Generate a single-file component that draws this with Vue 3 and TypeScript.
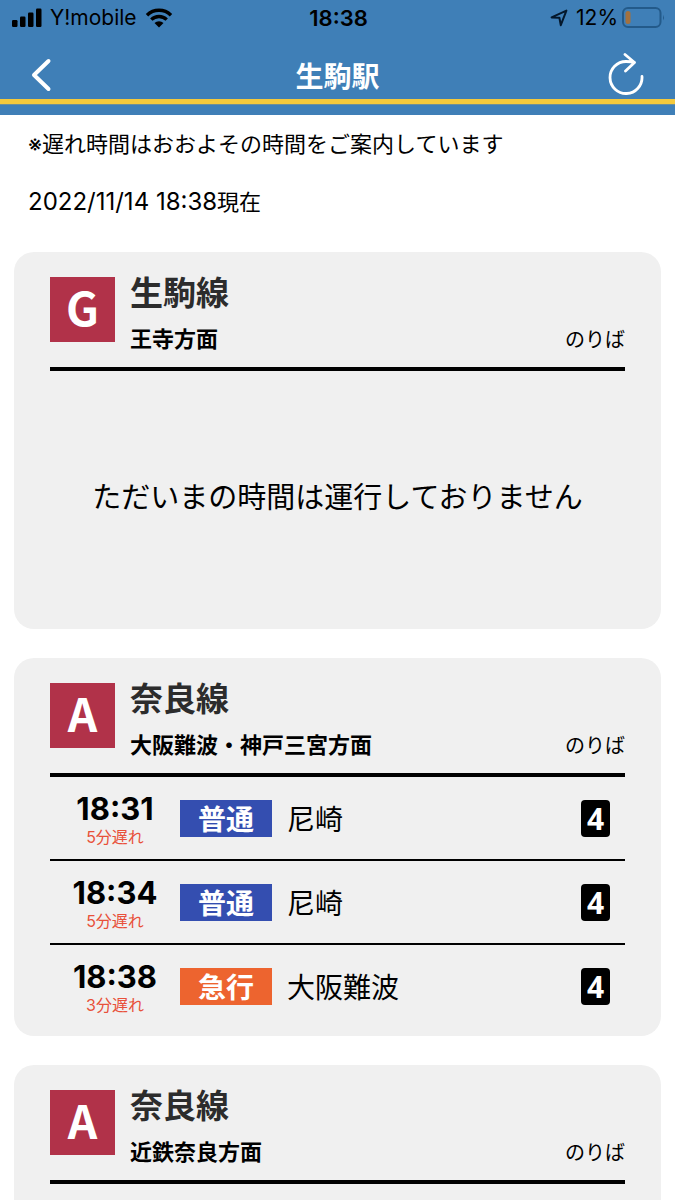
<script setup lang="ts">
interface Departure {
  time: string
  delay: string
  type: string
  kind: 'local' | 'express'
  destination: string
  platform: string
}

interface Board {
  symbol: string
  line: string
  direction: string
  message?: string
  departures: Departure[]
}

const boards: Board[] = [
  {
    symbol: 'G',
    line: '生駒線',
    direction: '王寺方面',
    message: 'ただいまの時間は運行しておりません',
    departures: [],
  },
  {
    symbol: 'A',
    line: '奈良線',
    direction: '大阪難波・神戸三宮方面',
    departures: [
      { time: '18:31', delay: '5分遅れ', type: '普通', kind: 'local', destination: '尼崎', platform: '4' },
      { time: '18:34', delay: '5分遅れ', type: '普通', kind: 'local', destination: '尼崎', platform: '4' },
      { time: '18:38', delay: '3分遅れ', type: '急行', kind: 'express', destination: '大阪難波', platform: '4' },
    ],
  },
  { symbol: 'A', line: '奈良線', direction: '近鉄奈良方面', departures: [] },
]
</script>

<template>
  <div class="app" lang="ja">
    <header class="top">
      <div class="status">
        <div class="status-side">
          <svg width="30" height="20" viewBox="0 0 30 20" aria-hidden="true">
            <rect x="0" y="12" width="5.5" height="7" rx="1.2" />
            <rect x="8" y="8.5" width="5.5" height="10.5" rx="1.2" />
            <rect x="16" y="4.5" width="5.5" height="14.5" rx="1.2" />
            <rect x="24" y="0.5" width="5.5" height="18.5" rx="1.2" />
          </svg>
          <span>Y!mobile</span>
          <svg class="wifi" width="28" height="20" viewBox="0 0 28 20" aria-hidden="true">
            <path d="M2 7.2a17 17 0 0 1 24 0" />
            <path d="M6.3 11.6a11 11 0 0 1 15.4 0" />
            <path class="dot" d="M9.5 15a6.5 6.5 0 0 1 9 0L14 19.5z" />
          </svg>
        </div>
        <span class="clock">18:38</span>
        <div class="status-side end">
          <svg class="location" width="18" height="18" viewBox="0 0 18 18" aria-hidden="true">
            <path d="M1.6 8.4 16.4 1.6 10.8 16.2 9.4 8.8z" />
          </svg>
          <span>12%</span>
          <svg width="43" height="22" viewBox="0 0 43 22" aria-hidden="true">
            <rect class="shell" x="1" y="1" width="37.5" height="19" rx="5" />
            <rect class="charge" x="3.5" y="4" width="5" height="13" rx="2.5" />
            <path class="nub" d="M41 7.5q1.8 3 0 6z" />
          </svg>
        </div>
      </div>
      <nav class="bar">
        <button type="button" class="icon-button" aria-label="戻る">
          <svg width="24" height="34" viewBox="0 0 24 34"><path class="back" d="M18.5 3 4 17l14.5 14" /></svg>
        </button>
        <h1>生駒駅</h1>
        <button type="button" class="icon-button" aria-label="更新">
          <svg width="38" height="44" viewBox="0 0 38 44">
            <path class="reload" d="M35 23.5A16 16 0 1 1 19 8.5q5 0 8.5 .8M18 1.5l9.5 8-9 8.5" />
          </svg>
        </button>
      </nav>
      <div class="stripe"></div>
    </header>

    <main>
      <p class="note">※遅れ時間はおおよその時間をご案内しています</p>
      <p class="updated"><time datetime="2022-11-14T18:38">2022/11/14 18:38</time>現在</p>

      <section v-for="(board, i) in boards" :key="i" class="card">
        <div class="card-head">
          <span class="symbol">{{ board.symbol }}</span>
          <div class="names">
            <h2 :id="`line-${i}`">{{ board.line }}</h2>
            <h3>{{ board.direction }}</h3>
          </div>
          <span class="platform-label">のりば</span>
        </div>
        <p v-if="board.message" class="message">{{ board.message }}</p>
        <table v-if="board.departures.length" :aria-labelledby="`line-${i}`">
          <tbody>
            <tr v-for="d in board.departures" :key="d.time">
              <td class="when">
                <span class="time">{{ d.time }}</span>
                <span class="delay">{{ d.delay }}</span>
              </td>
              <td class="type"><span class="tag" :class="d.kind">{{ d.type }}</span></td>
              <td class="destination">{{ d.destination }}</td>
              <td class="platform"><span class="number">{{ d.platform }}</span></td>
            </tr>
          </tbody>
        </table>
      </section>
    </main>
  </div>
</template>

<style>
body {
  background: #fff;
}
</style>

<style scoped>
* {
  box-sizing: border-box;
}
h1, h2, h3, p {
  margin: 0;
}
.app {
  display: flex;
  flex-direction: column;
  height: 100vh;
  background: #fff;
  color: #000;
  font-family: Inter, "Noto Sans CJK JP", sans-serif;
}
.top {
  flex: none;
  background: #3f7fb7;
}
.status {
  display: flex;
  align-items: center;
  height: 36px;
  padding: 0 10px 0 12px;
  font-size: 21px;
  line-height: 36px;
}
.status-side {
  display: flex;
  flex: 1;
  align-items: center;
  gap: 8px;
}
.end {
  justify-content: flex-end;
  gap: 4px;
}
.clock {
  font-size: 22px;
  font-weight: 600;
}
.wifi path {
  fill: none;
  stroke: #000;
  stroke-width: 3.4;
}
.wifi .dot {
  fill: #000;
  stroke: none;
}
.location {
  margin-right: 4px;
  fill: none;
  stroke: #04182c;
  stroke-width: 2;
  stroke-linejoin: round;
}
.shell {
  fill: none;
  stroke: #235a8a;
  stroke-width: 2;
}
.charge {
  fill: #a3713f;
}
.nub {
  fill: #235a8a;
}
.bar {
  display: flex;
  align-items: center;
  justify-content: space-between;
  height: 63px;
  padding: 14px 30px 0;
}
h1 {
  padding-top: 4px;
  color: #fff;
  font-size: 28px;
  line-height: 40px;
  font-weight: 700;
}
.icon-button {
  display: flex;
  align-items: center;
  width: 38px;
  height: 48px;
  padding: 0;
  border: 0;
  background: none;
  cursor: pointer;
}
.icon-button path {
  fill: none;
  stroke: #fff;
  stroke-linecap: round;
  stroke-linejoin: round;
}
.icon-button .back {
  stroke-width: 4;
}
.icon-button .reload {
  stroke-width: 2.8;
}
.stripe {
  height: 16px;
  border-top: 5px solid #f5c93b;
  box-shadow: inset 0 1px #6f8f96;
}
main {
  flex: 1;
  min-height: 0;
  padding: 14px 14px 29px;
  overflow-y: auto;
  scrollbar-width: none;
}
.note, .updated {
  padding: 0 14px;
  font-size: 22px;
  line-height: 30px;
}
.updated {
  margin: 28px 0 35px;
}
.updated time {
  font-size: 24px;
}
.card {
  min-height: 377px;
  padding: 20px 36px 9px;
  border-radius: 20px;
  background: #f0f0f0;
}
.card + .card {
  margin-top: 29px;
}
.card-head {
  display: flex;
  align-items: flex-end;
  height: 99px;
  border-bottom: 4px solid #000;
}
.symbol {
  align-self: flex-start;
  width: 65px;
  height: 65px;
  margin: 5px 15px 0 0;
  background: #b13249;
  color: #fff;
  font-family: "Noto Sans CJK JP", sans-serif;
  font-size: 46px;
  font-weight: 700;
  line-height: 58px;
  text-align: center;
}
.names {
  flex: 1;
  padding-bottom: 12px;
}
h2 {
  color: #2c2c2c;
  font-size: 33px;
  line-height: 44px;
}
h3 {
  margin-top: 8px;
  font-size: 22px;
  line-height: 32px;
}
.platform-label {
  padding-bottom: 11px;
  font-size: 20px;
  line-height: 32px;
}
.message {
  padding: 105px 0 100px;
  font-size: 29px;
  line-height: 44px;
  text-align: center;
}
table {
  width: 100%;
  border-spacing: 0;
  table-layout: fixed;
}
td {
  height: 84px;
  padding: 0;
  border-bottom: 2px solid #000;
  vertical-align: middle;
}
tr:last-child td {
  height: 82px;
  border-bottom: 0;
}
.when {
  width: 130px;
  padding-top: 4px;
  text-align: center;
}
.time, .delay {
  display: block;
}
.time {
  font-size: 31px;
  font-weight: 700;
  line-height: 34px;
}
.delay {
  color: #e8503a;
  font-size: 16px;
  line-height: 22px;
}
.type {
  width: 107px;
}
.tag {
  display: block;
  width: 92px;
  height: 37px;
  color: #fff;
  font-size: 28px;
  font-weight: 700;
  line-height: 40px;
  text-align: center;
}
.local {
  background: #344eb0;
}
.express {
  background: #ed642f;
}
.destination {
  font-size: 28px;
}
.platform {
  width: 60px;
  padding-right: 15px;
}
.number {
  display: block;
  width: 29px;
  height: 37px;
  margin-left: auto;
  border-radius: 4px;
  background: #000;
  color: #fff;
  font-family: "Open Sans", sans-serif;
  font-size: 30px;
  font-weight: 700;
  line-height: 37px;
  text-align: center;
}
</style>
